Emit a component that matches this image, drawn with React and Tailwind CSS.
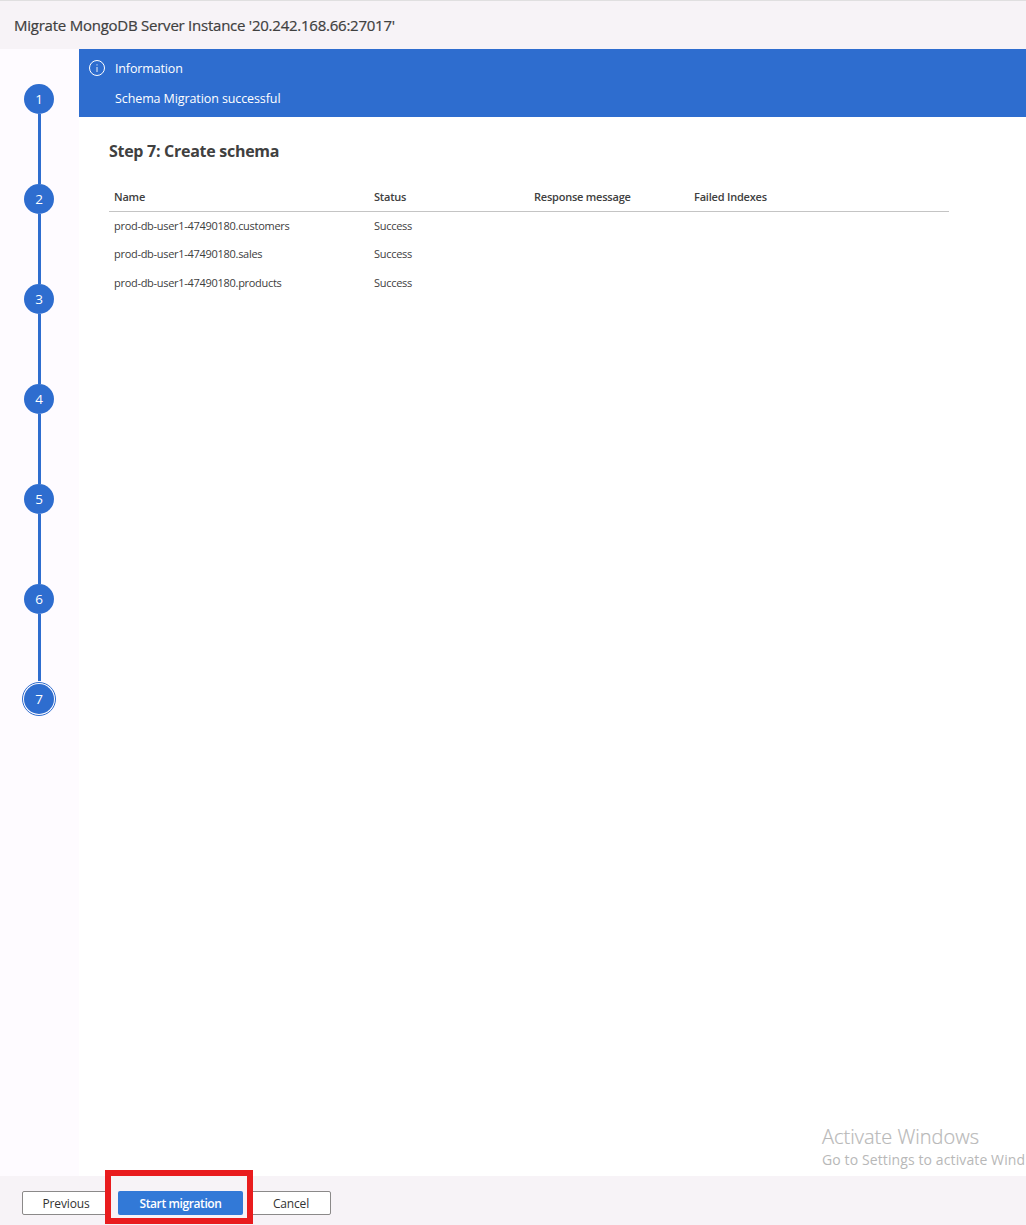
const steps = [1, 2, 3, 4, 5, 6, 7];
const collections = ["customers", "sales", "products"];

function Step({ number }) {
  const current = number === 7;
  return (
    <li className="flex flex-col items-center">
      <span
        className={
          "flex h-[30px] w-[30px] shrink-0 items-center justify-center rounded-full bg-[#2e6dcf] text-[13.5px] leading-none text-white " +
          (current ? "outline outline-1 outline-offset-1 outline-[#2e6dcf]" : "")
        }
      >
        <span className="pt-px">{number}</span>
      </span>
      {!current && (
        <span className={"ml-[1px] w-[3px] bg-[#2e6dcf] " + (number === 6 ? "mb-[3px] h-[67px]" : "h-[70px]")} />
      )}
    </li>
  );
}

export default function App() {
  return (
    <div className="flex h-[1225px] w-[1026px] flex-col overflow-hidden bg-white font-['Open_Sans','Noto_Sans',sans-serif] text-[#404040]">
      <header className="flex h-[49px] shrink-0 items-center border-t border-[#e0dfe0] bg-[#f7f3f7] pl-[14px] text-[15px] font-medium">
        <h1 className="tracking-[-0.24px] whitespace-nowrap [-webkit-text-stroke:0.2px_#404040]">Migrate MongoDB Server Instance '20.242.168.66:27017'</h1>
      </header>

      <div className="flex min-h-0 flex-1">
        <nav className="w-[79px] shrink-0 bg-[#fefbff] pt-[35px]">
          <ol className="-ml-[1px]">
            {steps.map((n) => (
              <Step key={n} number={n} />
            ))}
          </ol>
        </nav>

        <main className="relative min-w-0 flex-1">
          <section className="flex h-[68px] bg-[#2e6dcf] pl-[10px] pt-[9px] text-[12.5px] leading-5 text-white">
            <svg className="mt-[2px] mr-[10px] h-4 w-4" viewBox="0 0 16 16" fill="none" stroke="currentColor">
              <circle cx="8" cy="8" r="7.5" />
              <path d="M8 7v5M8 4.3v1.2" strokeWidth="0.9" />
            </svg>
            <div className="pt-px whitespace-nowrap">
              <p className="tracking-[-0.15px]">Information</p>
              <p className="mt-[10px] tracking-[-0.1px]">Schema Migration successful</p>
            </div>
          </section>

          <section className="pl-[30px] pt-[22px]">
            <h2 className="text-[16px] leading-6 font-bold tracking-[-0.28px]">Step 7: Create schema</h2>
            <table className="mt-[19.5px] w-[840px] table-fixed border-collapse text-left text-[11px] whitespace-nowrap">
              <colgroup>
                <col className="w-[260px]" />
                <col className="w-[160px]" />
                <col className="w-[160px]" />
                <col className="w-[260px]" />
              </colgroup>
              <thead>
                <tr className="h-[29px] border-b border-[#c4c4c4]">
                  <th className="p-0 pl-[5px] font-semibold tracking-[-0.2px]">Name</th>
                  <th className="p-0 pl-[5px] font-semibold tracking-[-0.2px]">Status</th>
                  <th className="p-0 pl-[5px] font-semibold tracking-[-0.22px]">Response message</th>
                  <th className="p-0 pl-[5px] font-semibold tracking-[-0.2px]">Failed Indexes</th>
                </tr>
              </thead>
              <tbody>
                {collections.map((c) => (
                  <tr key={c} className="h-[28.5px]">
                    <td className="p-0 pl-[5px] tracking-[-0.29px]">prod-db-user1-47490180.{c}</td>
                    <td className="p-0 pl-[5px] tracking-[-0.29px]">Success</td>
                    <td />
                    <td />
                  </tr>
                ))}
              </tbody>
            </table>
          </section>

          <aside className="absolute top-[1076px] left-[743px] whitespace-nowrap text-[#b8b8b8]">
            <p className="text-[20px] leading-6 font-light [-webkit-text-stroke:0.2px_#b8b8b8]">Activate Windows</p>
            <p className="text-[14px] leading-[22px] font-normal tracking-[0.11px]">Go to Settings to activate Wind</p>
          </aside>
        </main>
      </div>

      <footer className="flex h-[49px] shrink-0 gap-2 bg-[#f7f3f7] pt-[15px] pl-[22px] text-[12px] tracking-[-0.15px] text-[#333]">
        <button className="h-6 w-[88px] rounded-[2px] border border-[#8b8989] bg-white pt-px">Previous</button>
        <div className="relative">
          <button className="h-6 w-[125px] rounded-[2px] bg-[#3279d7] pt-px font-semibold tracking-[-0.4px] text-white">Start migration</button>
          <span className="pointer-events-none absolute -top-[21px] -left-[13px] h-[54px] w-[148px] border-[6px] border-[#e91c1e]" />
          <span className="pointer-events-none absolute -top-[15px] -left-[7px] h-[42px] w-[7px] bg-[#f7f3f7]" />
          <span className="pointer-events-none absolute -top-[15px] -right-[4px] h-[42px] w-[4px] bg-[#f7f3f7]" />
        </div>
        <button className="h-6 w-[80px] rounded-[2px] border border-[#8b8989] bg-white pt-px">Cancel</button>
      </footer>
    </div>
  );
}
